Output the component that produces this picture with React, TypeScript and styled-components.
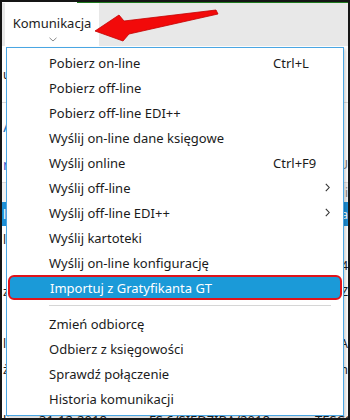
import React from "react";
import styled, { createGlobalStyle } from "styled-components";

const GlobalStyle = createGlobalStyle`
  html, body {
    margin: 0;
    padding: 0;
    background: #ffffff;
  }
  * {
    box-sizing: border-box;
  }
`;

const Frame = styled.div`
  position: relative;
  width: 350px;
  height: 420px;
  overflow: hidden;
  border: 2px solid #151515;
  background: #ffffff;
  font-family: "Noto Sans", "Open Sans", sans-serif;
  color: #1b1b1b;
`;

const TopStrip = styled.div`
  height: 1px;
  margin-left: 75px;
  background: #1f7a1f;
`;

const Toolbar = styled.div`
  display: flex;
  align-items: stretch;
  height: 43px;
  padding-left: 3px;
  background: #e8e8e8;
`;

const Tab = styled.div`
  width: 94px;
  display: flex;
  flex-direction: column;
  align-items: center;
  padding-top: 11px;
  background: #ffffff;
  font-size: 13px;
`;

const TabLabel = styled.span`
  line-height: 18px;
  color: #222;
`;

const TabChevron = styled.svg`
  margin-top: 5px;
  margin-left: 2px;
`;

const Content = styled.div`
  display: flex;
  flex-direction: column;
  font-size: 12px;
`;

const Band = styled.div<{ $h: number; $bg?: string; $line?: boolean }>`
  height: ${(p) => p.$h}px;
  background: ${(p) => p.$bg ?? "#ffffff"};
  border-bottom: ${(p) => (p.$line ? "1px solid #dcdcdc" : "none")};
  display: flex;
  align-items: center;
  justify-content: space-between;
  padding: 0 0 0 1px;
  white-space: nowrap;
`;

const BandText = styled.span<{ $color?: string; $size?: number }>`
  color: ${(p) => p.$color ?? "#222"};
  font-size: ${(p) => p.$size ?? 12}px;
`;

const TableRow = styled.div<{ $selected?: boolean }>`
  height: ${(p) => (p.$selected ? 24 : 26)}px;
  display: flex;
  align-items: center;
  justify-content: space-between;
  padding-left: 1px;
  background: ${(p) => (p.$selected ? "#1c8fd6" : "#ffffff")};
  color: ${(p) => (p.$selected ? "#ffffff" : "#222")};
  white-space: nowrap;
  font-size: 12px;
`;

const LastRow = styled.div`
  height: 24px;
  display: grid;
  grid-template-columns: 36px 110px 166px 1fr;
  align-items: center;
  padding-left: 1px;
  white-space: nowrap;
  font-size: 13px;
  color: #222;
`;

const ArrowMark = styled.svg`
  position: absolute;
  left: 0;
  top: 0;
  pointer-events: none;
`;

const Menu = styled.div`
  position: absolute;
  left: 4px;
  top: 45px;
  width: 338px;
  padding: 2px 0 4px;
  background: #ffffff;
  border: 1px solid #4aa6e3;
  box-shadow: 2px 2px 3px rgba(0, 0, 0, 0.18);
  font-size: 13px;
`;

const Item = styled.div<{ $active?: boolean }>`
  display: grid;
  grid-template-columns: 224px 46px 1fr;
  align-items: center;
  height: 25px;
  padding-left: ${(p) => (p.$active ? 40 : 42)}px;
  margin: 0 ${(p) => (p.$active ? 1 : 0)}px;
  background: ${(p) => (p.$active ? "#1b9ad8" : "transparent")};
  color: ${(p) => (p.$active ? "#ffffff" : "#1b1b1b")};
  border: ${(p) => (p.$active ? "2px solid #e0141b" : "none")};
  border-radius: ${(p) => (p.$active ? 6 : 0)}px;
  white-space: nowrap;
`;

const Label = styled.span`
  line-height: 18px;
`;

const Shortcut = styled.span`
  line-height: 18px;
`;

const SubArrow = styled.svg`
  justify-self: start;
  margin-left: 6px;
`;

const Separator = styled.div`
  height: 11px;
  display: flex;
  align-items: center;
  padding: 0 12px 0 42px;

  &::after {
    content: "";
    flex: 1;
    height: 1px;
    background: #d6d6d6;
  }
`;

type Entry =
  | { label: string; shortcut?: string; sub?: boolean; active?: boolean }
  | "sep";

const entries: Entry[] = [
  { label: "Pobierz on-line", shortcut: "Ctrl+L" },
  { label: "Pobierz off-line" },
  { label: "Pobierz off-line EDI++" },
  { label: "Wyślij on-line dane księgowe" },
  { label: "Wyślij online", shortcut: "Ctrl+F9" },
  { label: "Wyślij off-line", sub: true },
  { label: "Wyślij off-line EDI++", sub: true },
  { label: "Wyślij kartoteki" },
  { label: "Wyślij on-line konfigurację" },
  { label: "Importuj z Gratyfikanta GT", active: true },
  "sep",
  { label: "Zmień odbiorcę" },
  { label: "Odbierz z księgowości" },
  { label: "Sprawdź połączenie" },
  { label: "Historia komunikacji" },
];

const rows = [
  { a: "l", d: "" },
  { a: "", d: "4" },
  { a: "z", d: "Z" },
  { a: "", d: "" },
  { a: "li", d: "A" },
  { a: "ży", d: "n" },
  { a: "", d: "" },
];

const App: React.FC = () => {
  return (
    <>
      <GlobalStyle />
      <Frame>
        <TopStrip />
        <Toolbar>
          <Tab>
            <TabLabel>Komunikacja</TabLabel>
            <TabChevron width="8" height="5" viewBox="0 0 8 5">
              <path d="M0.5 0.8 L4 4 L7.5 0.8" fill="none" stroke="#8a8a8a" strokeWidth="1" />
            </TabChevron>
          </Tab>
        </Toolbar>
        <Content>
          <Band $h={57} $line>
            <BandText>u</BandText>
          </Band>
          <Band $h={44}>
            <BandText $color="#1a6fb5" $size={17}>/</BandText>
          </Band>
          <Band $h={36} $line>
            <BandText $color="#3b55c8" $size={14}>n</BandText>
            <BandText $color="#777">U</BandText>
          </Band>
          <Band $h={19} $bg="#f2f2f2">
            <span />
            <BandText $color="#888">i</BandText>
          </Band>
          <TableRow $selected>
            <span>li</span>
            <span>a</span>
          </TableRow>
          {rows.map((r, i) => (
            <TableRow key={i}>
              <span>{r.a}</span>
              <span>{r.d}</span>
            </TableRow>
          ))}
          <LastRow>
            <span>lic</span>
            <span>31-12-2018</span>
            <span>FS 6/SIEDZIBA/2018</span>
            <span>TESCO</span>
          </LastRow>
        </Content>

        <ArrowMark width="350" height="60" viewBox="0 0 350 60">
          <polygon
            points="93,29 117,13 122,19 214,8 216,12 127,32 121,39"
            fill="#f20a0a"
            stroke="#c40000"
            strokeWidth="0.8"
            strokeLinejoin="round"
          />
        </ArrowMark>

        <Menu>
          {entries.map((e, i) =>
            e === "sep" ? (
              <Separator key={i} />
            ) : (
              <Item key={i} $active={e.active}>
                <Label>{e.label}</Label>
                <Shortcut>{e.shortcut ?? ""}</Shortcut>
                {e.sub ? (
                  <SubArrow width="5" height="9" viewBox="0 0 5 9">
                    <path d="M0.8 0.8 L4.2 4.5 L0.8 8.2" fill="none" stroke="#333" strokeWidth="1.1" />
                  </SubArrow>
                ) : (
                  <span />
                )}
              </Item>
            )
          )}
        </Menu>
      </Frame>
    </>
  );
};

export default App;
